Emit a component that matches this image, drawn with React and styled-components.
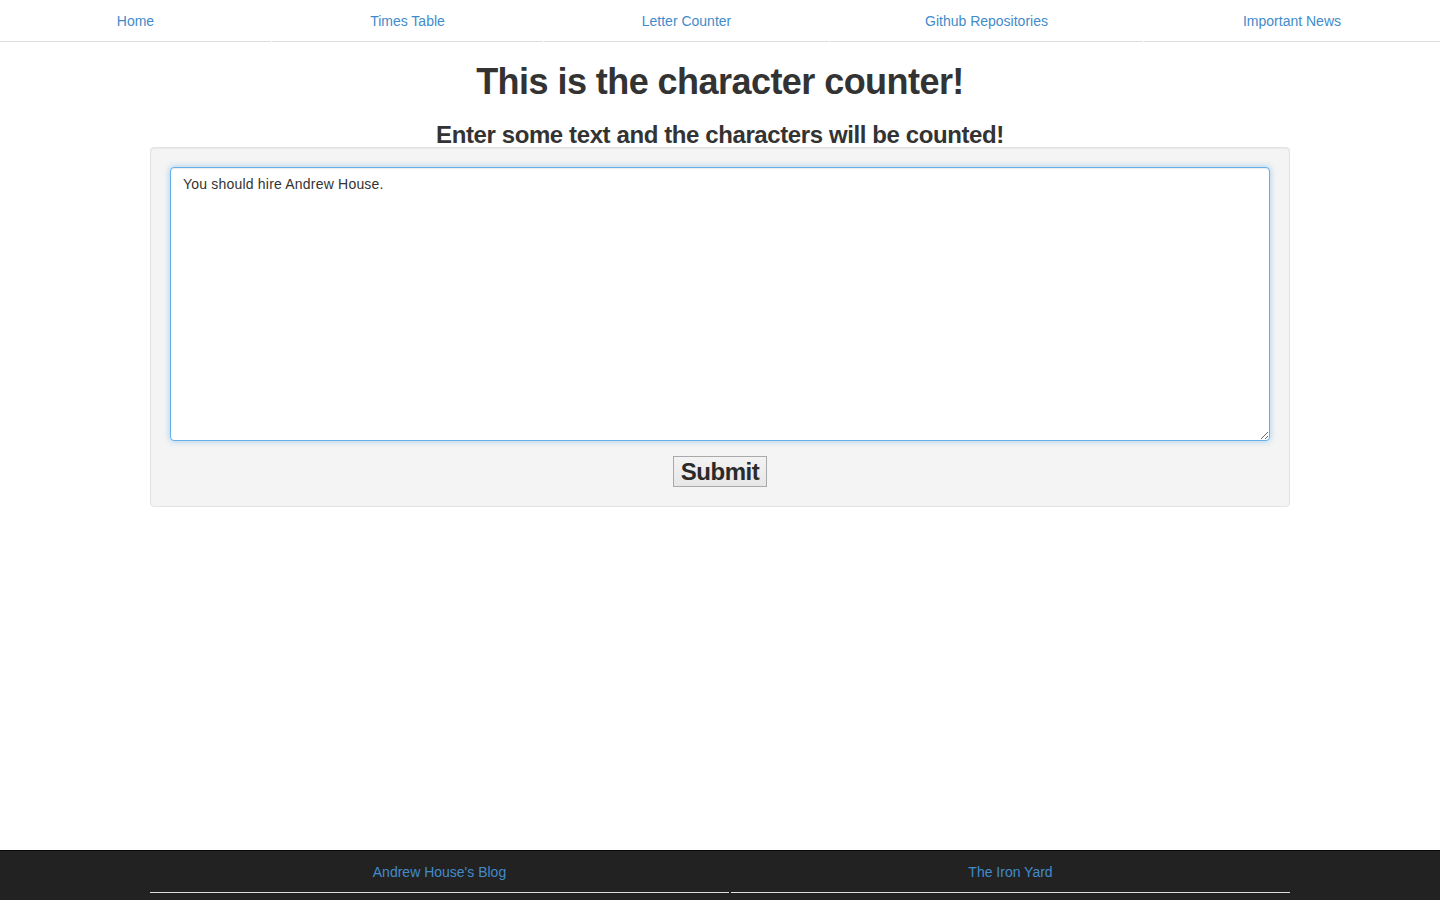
import React, { useState, useRef, useEffect } from "react";
import styled, { createGlobalStyle } from "styled-components";

const Global = createGlobalStyle`
  * { box-sizing: border-box; }
  html, body { margin: 0; padding: 0; }
  body {
    font-family: "Liberation Sans", Arial, Helvetica, sans-serif;
    font-size: 14px;
    line-height: 1.42857;
    color: #333;
    background: #fff;
  }
`;

const Page = styled.div`
  min-height: 900px;
  display: flex;
  flex-direction: column;
`;

const NavList = styled.ul`
  list-style: none;
  margin: 0;
  padding: 0;
  display: grid;
  grid-template-columns: ${(p) => p.$cols};
  column-gap: ${(p) => p.$gap || "0px"};
`;

const NavItem = styled.li`
  display: block;
`;

const NavLink = styled.a`
  display: block;
  text-align: center;
  padding: 11px 15px 10px;
  line-height: 20px;
  font-size: 14px;
  color: #428bca;
  text-decoration: none;
  border-bottom: 1px solid ${(p) => p.$line};
  cursor: pointer;
`;

const Container = styled.main`
  width: 1170px;
  margin: 0 auto;
  padding: 0 15px;
  flex: 1;
`;

const Title = styled.h1`
  margin: 20px 0 0;
  font-size: 36px;
  font-weight: 700;
  letter-spacing: -0.55px;
  line-height: 1.1;
  text-align: center;
  color: #333;
`;

const Subtitle = styled.h3`
  margin: 20px 0 0;
  font-size: 24px;
  font-weight: 700;
  letter-spacing: -0.4px;
  line-height: 1.1;
  text-align: center;
  color: #333;
`;

const Well = styled.form`
  margin-top: -1px;
  padding: 19px;
  background: #f4f4f4;
  border: 1px solid #e3e3e3;
  border-radius: 4px;
  box-shadow: inset 0 1px 1px rgba(0, 0, 0, 0.05);
  display: flex;
  flex-direction: column;
  align-items: center;
`;

const TextArea = styled.textarea`
  display: block;
  width: 100%;
  height: 274px;
  padding: 7px 12px 8px;
  font-family: "Liberation Sans", Arial, Helvetica, sans-serif;
  font-size: 14px;
  letter-spacing: 0.2px;
  line-height: 1.42857;
  color: #333;
  background: #fff;
  border: 1px solid #66afe9;
  border-radius: 4px;
  outline: 0;
  caret-color: #333;
  box-shadow: inset 0 1px 1px rgba(0, 0, 0, 0.075), 0 0 6px rgba(102, 175, 233, 0.6);
  resize: vertical;
`;

const SubmitButton = styled.button`
  margin-top: 15px;
  height: 31px;
  width: 94px;
  padding: 2px 6px 0;
  font-family: "Liberation Sans", Arial, Helvetica, sans-serif;
  font-size: 24px;
  font-weight: 700;
  letter-spacing: -0.5px;
  line-height: 1;
  color: #2a2a2a;
  background: linear-gradient(#f3f3f3, #e6e6e6);
  border: 1px solid #a9a9a9;
  border-radius: 0;
`;

const Footer = styled.footer`
  height: 50px;
  background: #222;
  border-top: 1px solid #080808;
`;

const FooterInner = styled.div`
  width: 1170px;
  margin: 0 auto;
  padding: 0 15px;
`;

export default function App() {
  const [text, setText] = useState("You should hire Andrew House.");
  const ref = useRef(null);
  useEffect(() => {
    const el = ref.current;
    if (el) {
      el.focus();
      el.setSelectionRange(el.value.length, el.value.length);
    }
  }, []);
  const nav = ["Home", "Times Table", "Letter Counter", "Github Repositories", "Important News"];
  return (
    <Page>
      <Global />
      <NavList $cols="271fr 271fr 285fr 313fr 296fr" $gap="1px">
        {nav.map((n) => (
          <NavItem key={n}>
            <NavLink $line="#dddddd">{n}</NavLink>
          </NavItem>
        ))}
      </NavList>
      <Container>
        <Title>This is the character counter!</Title>
        <Subtitle>Enter some text and the characters will be counted!</Subtitle>
        <Well onSubmit={(e) => e.preventDefault()}>
          <TextArea ref={ref} value={text} onChange={(e) => setText(e.target.value)} />
          <SubmitButton type="submit">Submit</SubmitButton>
        </Well>
      </Container>
      <Footer>
        <FooterInner>
          <NavList $cols="579fr 559fr" $gap="2px">
            <NavItem>
              <NavLink $line="#dddddd">Andrew House's Blog</NavLink>
            </NavItem>
            <NavItem>
              <NavLink $line="#dddddd">The Iron Yard</NavLink>
            </NavItem>
          </NavList>
        </FooterInner>
      </Footer>
    </Page>
  );
}
